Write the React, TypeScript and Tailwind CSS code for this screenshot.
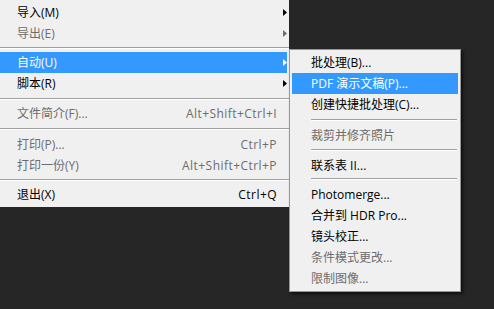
type Item = {
  label: string;
  shortcut?: string;
  arrow?: boolean;
  disabled?: boolean;
  active?: boolean;
};

type Entry = Item | { sep: string };

const mainEntries: Entry[] = [
  { label: "导入(M)", arrow: true },
  { label: "导出(E)", arrow: true, disabled: true },
  { sep: "pt-[3px] pb-[3px]" },
  { label: "自动(U)", arrow: true, active: true },
  { label: "脚本(R)", arrow: true },
  { sep: "pt-[4px] pb-[3px]" },
  { label: "文件简介(F)...", shortcut: "Alt+Shift+Ctrl+I", disabled: true },
  { sep: "pt-[4px] pb-[4px]" },
  { label: "打印(P)...", shortcut: "Ctrl+P", disabled: true },
  { label: "打印一份(Y)", shortcut: "Alt+Shift+Ctrl+P", disabled: true },
  { sep: "pt-[3px] pb-[3px]" },
  { label: "退出(X)", shortcut: "Ctrl+Q" },
];

const subEntries: Entry[] = [
  { label: "批处理(B)..." },
  { label: "PDF 演示文稿(P)...", active: true },
  { label: "创建快捷批处理(C)..." },
  { sep: "pt-[4px] pb-[4px]" },
  { label: "裁剪并修齐照片", disabled: true },
  { sep: "pt-[3px] pb-[4px]" },
  { label: "联系表 II..." },
  { sep: "pt-[2px] pb-[4px]" },
  { label: "Photomerge..." },
  { label: "合并到 HDR Pro..." },
  { label: "镜头校正..." },
  { label: "条件模式更改...", disabled: true },
  { label: "限制图像...", disabled: true },
];

function Separator({ pad, inset }: { pad: string; inset?: boolean }) {
  return (
    <div className={pad + (inset ? " pl-[19px] pr-[1px]" : "")}>
      <div className="h-px bg-[#a0a0a0]" />
      <div className="h-px bg-white" />
    </div>
  );
}

function textColor(item: Item) {
  if (item.active) return "text-white";
  if (item.disabled) return "text-[#6d6d6d]";
  return "text-[#000000]";
}

function MainRow({ item }: { item: Item }) {
  return (
    <div
      className={
        "flex h-[21px] items-center mr-[2px] " +
        (item.active ? "bg-[#3399ff] " : "") +
        textColor(item)
      }
    >
      <span className="flex-1 pl-[17px]">{item.label}</span>
      {item.shortcut && <span className="tracking-[0.45px]">{item.shortcut}</span>}
      <span className="flex w-[10px] justify-end">
        {item.arrow && (
          <svg width="4" height="7" viewBox="0 0 4 7">
            <path d="M0 0 L4 3.5 L0 7 Z" fill={item.active ? "#ffffff" : item.disabled ? "#6d6d6d" : "#000000"} />
          </svg>
        )}
      </span>
    </div>
  );
}

function SubRow({ item }: { item: Item }) {
  return (
    <div
      className={
        "flex h-[21px] items-center pl-[19px] " +
        (item.active ? "bg-[#3399ff] " : "") +
        textColor(item)
      }
    >
      {item.label}
    </div>
  );
}

export default function App() {
  return (
    <div
      className="flex h-[309px] w-[494px] items-start overflow-hidden bg-[#262626] text-[12px] leading-[21px]"
      style={{ fontFamily: '"Open Sans", "Noto Sans CJK SC", sans-serif' }}
    >
      <div className="w-[289px] shrink-0 bg-[#f0f0f0] pt-[2px] pb-[2px]">
        {mainEntries.map((e, i) =>
          "sep" in e ? <Separator key={i} pad={e.sep} /> : <MainRow key={i} item={e} />
        )}
      </div>
      <div className="mt-[49px] w-[172px] shrink-0 border border-[#979797] bg-[#f0f0f0] p-[2px] shadow-[2px_2px_3px_rgba(0,0,0,0.6)]">
        {subEntries.map((e, i) =>
          "sep" in e ? <Separator key={i} pad={e.sep} inset /> : <SubRow key={i} item={e} />
        )}
      </div>
    </div>
  );
}
